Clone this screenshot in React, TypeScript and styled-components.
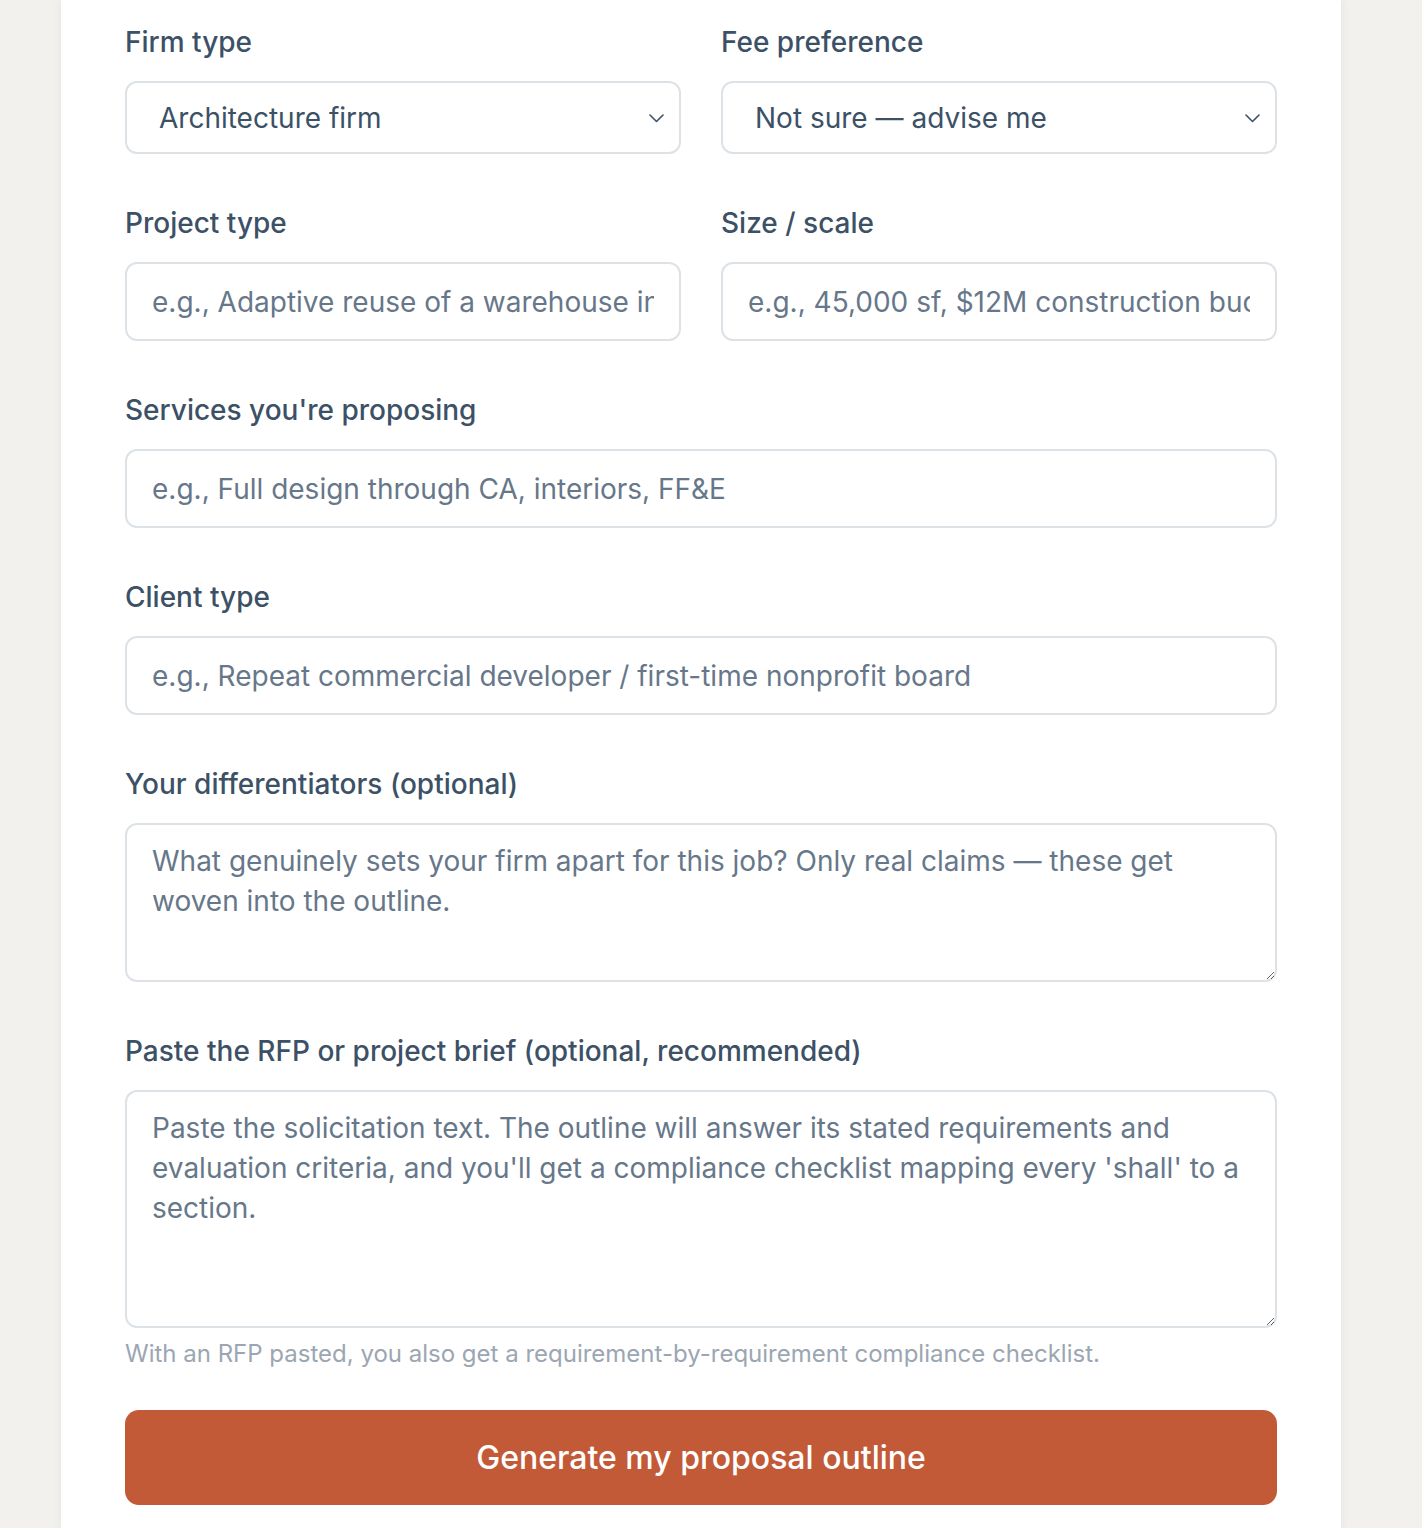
import React from "react";
import styled, { createGlobalStyle } from "styled-components";

const GlobalStyle = createGlobalStyle`
  html, body {
    margin: 0;
    padding: 0;
    background: #f2f1ed;
    font-family: Inter, "Liberation Sans", sans-serif;
  }
  * {
    box-sizing: border-box;
  }
`;

const Card = styled.main`
  width: 1280px;
  margin: 0 81px 0 61px;
  background: #ffffff;
  padding: 24px 64px 26px 64px;
  box-shadow: 0 0 10px rgba(40, 30, 20, 0.06);
  display: flex;
  flex-direction: column;
  gap: 51px;
`;

const Row = styled.div`
  display: grid;
  grid-template-columns: 1fr 1fr;
  column-gap: 40px;
`;

const Field = styled.div`
  display: flex;
  flex-direction: column;
`;

const Label = styled.label`
  font-size: 28px;
  line-height: 36px;
  font-weight: 500;
  color: #3c5166;
  margin-bottom: 21px;
`;

const SelectWrap = styled.div`
  position: relative;
`;

const Select = styled.select`
  appearance: none;
  width: 100%;
  height: 73px;
  padding: 0 60px 0 32px;
  border: 2px solid #dde2e7;
  border-radius: 12px;
  background: #ffffff;
  font-family: inherit;
  font-size: 28px;
  color: #3c5166;
  outline: none;
`;

const Chevron = styled.svg`
  position: absolute;
  right: 17px;
  top: 50%;
  width: 15px;
  height: 9px;
  margin-top: -4px;
  pointer-events: none;
`;

const Input = styled.input`
  width: 100%;
  height: 79px;
  padding: 0 25px;
  border: 2px solid #dde2e7;
  border-radius: 12px;
  font-family: inherit;
  font-size: 28px;
  color: #3c5166;
  outline: none;
  &::placeholder {
    color: #67778a;
  }
`;

const TextArea = styled.textarea<{ $height: number }>`
  width: 100%;
  height: ${(p) => p.$height}px;
  padding: 16px 25px;
  border: 2px solid #dde2e7;
  border-radius: 12px;
  font-family: inherit;
  font-size: 28px;
  line-height: 40px;
  color: #3c5166;
  resize: vertical;
  outline: none;
  display: block;
  &::placeholder {
    color: #67778a;
  }
`;

const Hint = styled.p`
  margin: 10px 0 0;
  font-size: 24px;
  line-height: 32px;
  color: #9ba6b2;
`;

const SubmitButton = styled.button`
  margin-top: -11px;
  height: 95px;
  width: 100%;
  border: none;
  border-radius: 14px;
  background: #c25a38;
  color: #ffffff;
  font-family: inherit;
  font-size: 32px;
  font-weight: 500;
  cursor: pointer;
`;

const Dropdown = ({ value, options }: { value: string; options: string[] }) => (
  <SelectWrap>
    <Select defaultValue={value}>
      {options.map((o) => (
        <option key={o}>{o}</option>
      ))}
    </Select>
    <Chevron viewBox="0 0 15 9" fill="none">
      <path d="M1 1 L7.5 7.5 L14 1" stroke="#3c5166" strokeWidth="1.6" strokeLinecap="round" strokeLinejoin="round" />
    </Chevron>
  </SelectWrap>
);

export default function App() {
  return (
    <>
      <GlobalStyle />
      <Card>
        <Row>
          <Field>
            <Label>Firm type</Label>
            <Dropdown value="Architecture firm" options={["Architecture firm", "Engineering firm", "Interior design firm", "Landscape architecture firm"]} />
          </Field>
          <Field>
            <Label>Fee preference</Label>
            <Dropdown value="Not sure — advise me" options={["Not sure — advise me", "Fixed fee", "Percentage of construction", "Hourly"]} />
          </Field>
        </Row>
        <Row>
          <Field>
            <Label>Project type</Label>
            <Input placeholder="e.g., Adaptive reuse of a warehouse into creative offices" />
          </Field>
          <Field>
            <Label>Size / scale</Label>
            <Input placeholder="e.g., 45,000 sf, $12M construction budget" />
          </Field>
        </Row>
        <Field>
          <Label>Services you're proposing</Label>
          <Input placeholder="e.g., Full design through CA, interiors, FF&E" />
        </Field>
        <Field>
          <Label>Client type</Label>
          <Input placeholder="e.g., Repeat commercial developer / first-time nonprofit board" />
        </Field>
        <Field>
          <Label>Your differentiators (optional)</Label>
          <TextArea
            $height={159}
            placeholder="What genuinely sets your firm apart for this job? Only real claims — these get woven into the outline."
          />
        </Field>
        <Field>
          <Label>Paste the RFP or project brief (optional, recommended)</Label>
          <TextArea
            $height={238}
            placeholder="Paste the solicitation text. The outline will answer its stated requirements and evaluation criteria, and you'll get a compliance checklist mapping every 'shall' to a section."
          />
          <Hint>With an RFP pasted, you also get a requirement-by-requirement compliance checklist.</Hint>
        </Field>
        <SubmitButton type="button">Generate my proposal outline</SubmitButton>
      </Card>
    </>
  );
}
